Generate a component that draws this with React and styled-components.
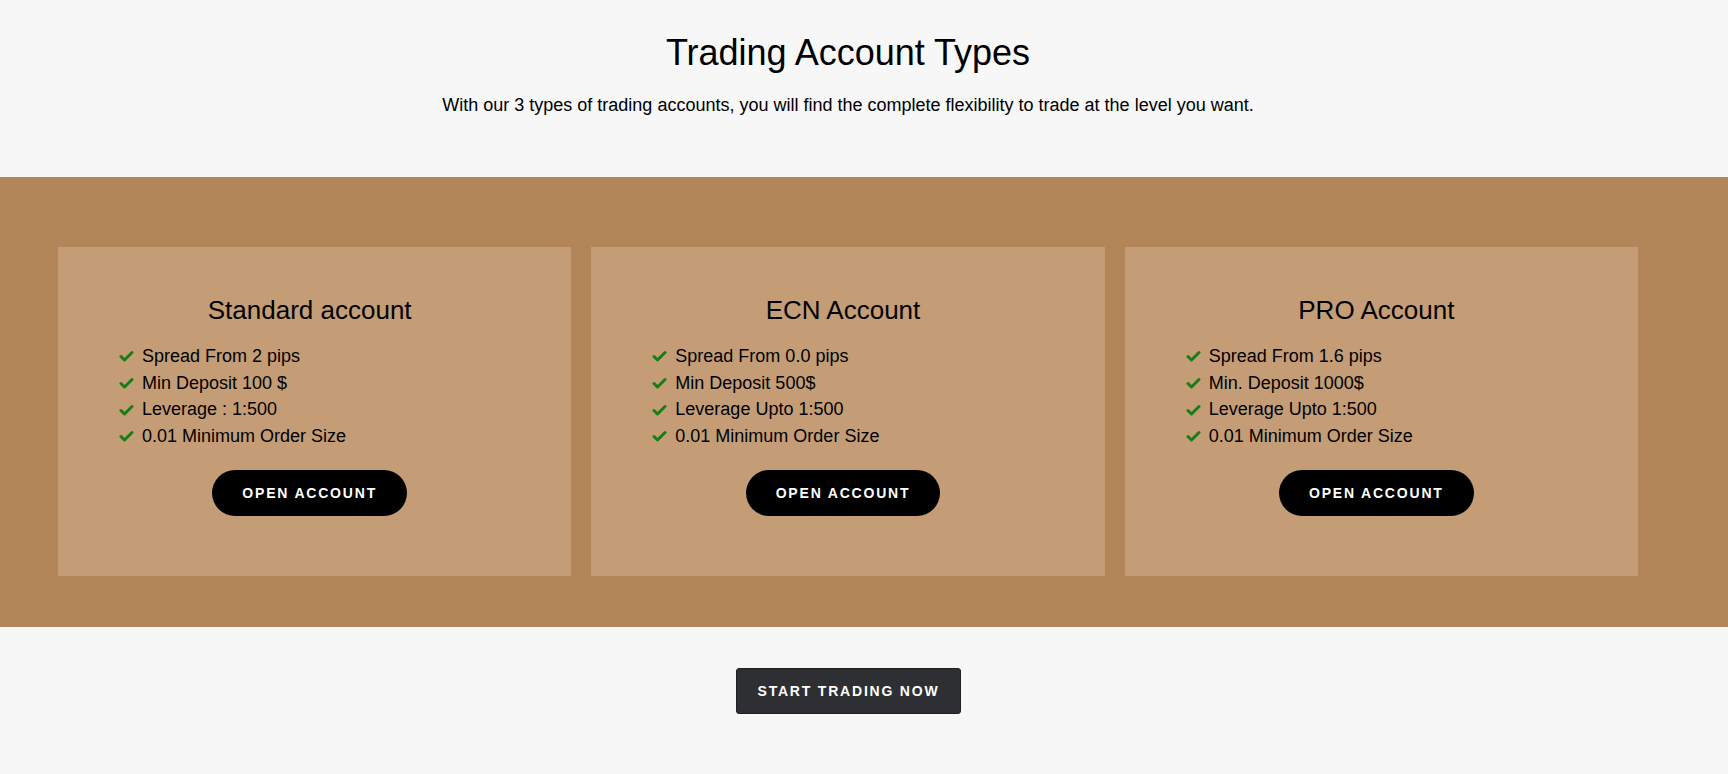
import React from "react";
import styled, { createGlobalStyle } from "styled-components";

const GlobalStyle = createGlobalStyle`
  body {
    margin: 0;
    background: #f7f7f7;
    font-family: "Liberation Sans", Arial, sans-serif;
    color: #000;
  }
`;

const Page = styled.div`
  min-height: 774px;
`;

const Header = styled.div`
  display: flex;
  flex-direction: column;
  align-items: center;
  padding: 32px 32px 0 0;
  height: 145px;
`;

const Title = styled.h2`
  margin: 0;
  font-size: 36px;
  font-weight: 400;
  line-height: 42px;
`;

const Subtitle = styled.p`
  margin: 18px 0 0;
  font-size: 18px;
  line-height: 27px;
`;

const Band = styled.div`
  background: #b38659;
  padding: 70px 90px 51px 58px;
`;

const Cards = styled.div`
  display: grid;
  grid-template-columns: repeat(3, 1fr);
  gap: 20px;
`;

const Card = styled.div`
  background: #c49d76;
  height: 329px;
  display: flex;
  flex-direction: column;
  align-items: center;
  padding: 48px 10px 0 0;
  box-sizing: border-box;
`;

const CardTitle = styled.h3`
  margin: 0;
  font-size: 26px;
  font-weight: 400;
  line-height: 31px;
`;

const List = styled.ul`
  align-self: flex-start;
  list-style: none;
  margin: 17px 0 0;
  padding: 0 0 0 61px;
`;

const Item = styled.li`
  display: flex;
  align-items: center;
  gap: 8px;
  font-size: 18px;
  line-height: 26.7px;
`;

const Check = styled.svg`
  width: 15px;
  height: 12px;
  flex-shrink: 0;
  fill: none;
  stroke: #177d17;
  stroke-width: 3;
  stroke-linecap: round;
  stroke-linejoin: round;
`;

const OpenButton = styled.button`
  margin-top: 20px;
  height: 46px;
  padding: 0 30px;
  border: none;
  border-radius: 23px;
  background: #000;
  color: #fff;
  font-family: inherit;
  font-size: 14px;
  font-weight: 700;
  letter-spacing: 1.8px;
  text-transform: uppercase;
  cursor: pointer;
`;

const Footer = styled.div`
  display: flex;
  justify-content: center;
  padding: 41px 32px 0 0;
`;

const StartButton = styled.button`
  height: 46px;
  padding: 0 20px 0 21px;
  border: 1px solid #1f2024;
  border-radius: 3px;
  background: #2e2f33;
  color: #fff;
  font-family: inherit;
  font-size: 14px;
  font-weight: 700;
  letter-spacing: 1.8px;
  cursor: pointer;
`;

const accounts = [
  {
    name: "Standard account",
    items: ["Spread From 2 pips", "Min Deposit 100 $", "Leverage : 1:500", "0.01 Minimum Order Size"],
  },
  {
    name: "ECN Account",
    items: ["Spread From 0.0 pips", "Min Deposit 500$", "Leverage Upto 1:500", "0.01 Minimum Order Size"],
  },
  {
    name: "PRO Account",
    items: ["Spread From 1.6 pips", "Min. Deposit 1000$", "Leverage Upto 1:500", "0.01 Minimum Order Size"],
  },
];

const CheckIcon = () => (
  <Check viewBox="0 0 15 12">
    <polyline points="2,6.5 5.5,10 13,2.5" />
  </Check>
);

export default function App() {
  return (
    <Page>
      <GlobalStyle />
      <Header>
        <Title>Trading Account Types</Title>
        <Subtitle>
          With our 3 types of trading accounts, you will find the complete flexibility to trade at the level you want.
        </Subtitle>
      </Header>
      <Band>
        <Cards>
          {accounts.map((acc) => (
            <Card key={acc.name}>
              <CardTitle>{acc.name}</CardTitle>
              <List>
                {acc.items.map((it) => (
                  <Item key={it}>
                    <CheckIcon />
                    {it}
                  </Item>
                ))}
              </List>
              <OpenButton>Open Account</OpenButton>
            </Card>
          ))}
        </Cards>
      </Band>
      <Footer>
        <StartButton>START TRADING NOW</StartButton>
      </Footer>
    </Page>
  );
}
